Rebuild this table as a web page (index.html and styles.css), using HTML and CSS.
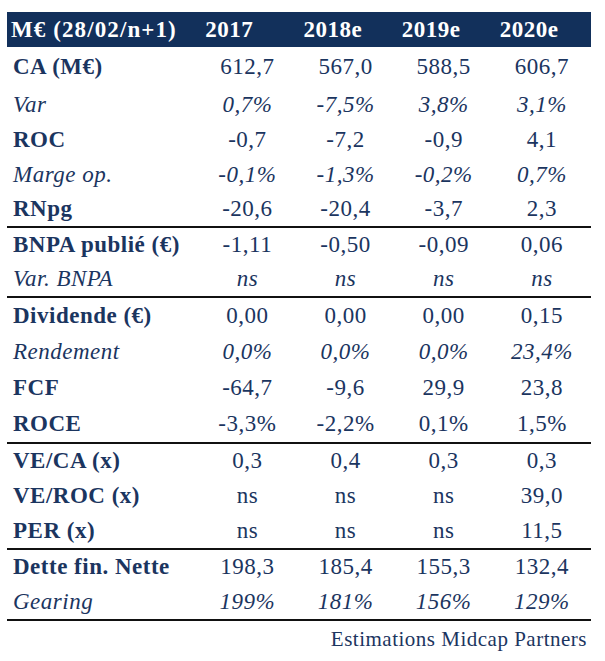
FILE: index.html
```html
<!DOCTYPE html>
<html lang="fr">
<head>
<meta charset="utf-8">
<title>Estimations</title>
<link rel="stylesheet" href="styles.css">
</head>
<body>
<div class="wrap">
<table class="fin">
<colgroup><col class="c-label"><col class="c-val"><col class="c-val"><col class="c-val"><col class="c-val"></colgroup>
<thead>
<tr class="head"><th class="lab">M€ (28/02/n+1)</th><th>2017</th><th>2018e</th><th>2019e</th><th>2020e</th></tr>
</thead>
<tbody class="s1">
<tr class="b first"><td class="lab">CA (M€)</td><td>612,7</td><td>567,0</td><td>588,5</td><td>606,7</td></tr>
<tr class="i"><td class="lab">Var</td><td>0,7%</td><td>-7,5%</td><td>3,8%</td><td>3,1%</td></tr>
<tr class="b"><td class="lab">ROC</td><td>-0,7</td><td>-7,2</td><td>-0,9</td><td>4,1</td></tr>
<tr class="i"><td class="lab">Marge op.</td><td>-0,1%</td><td>-1,3%</td><td>-0,2%</td><td>0,7%</td></tr>
<tr class="b"><td class="lab">RNpg</td><td>-20,6</td><td>-20,4</td><td>-3,7</td><td>2,3</td></tr>
</tbody>
<tbody class="s2 sep">
<tr class="b"><td class="lab">BNPA publié (€)</td><td>-1,11</td><td>-0,50</td><td>-0,09</td><td>0,06</td></tr>
<tr class="i"><td class="lab">Var. BNPA</td><td>ns</td><td>ns</td><td>ns</td><td>ns</td></tr>
</tbody>
<tbody class="s3 sep">
<tr class="b"><td class="lab">Dividende (€)</td><td>0,00</td><td>0,00</td><td>0,00</td><td>0,15</td></tr>
<tr class="i"><td class="lab">Rendement</td><td>0,0%</td><td>0,0%</td><td>0,0%</td><td>23,4%</td></tr>
<tr class="b"><td class="lab">FCF</td><td>-64,7</td><td>-9,6</td><td>29,9</td><td>23,8</td></tr>
<tr class="b"><td class="lab">ROCE</td><td>-3,3%</td><td>-2,2%</td><td>0,1%</td><td>1,5%</td></tr>
</tbody>
<tbody class="s4 sep">
<tr class="b"><td class="lab">VE/CA (x)</td><td>0,3</td><td>0,4</td><td>0,3</td><td>0,3</td></tr>
<tr class="b"><td class="lab">VE/ROC (x)</td><td>ns</td><td>ns</td><td>ns</td><td>39,0</td></tr>
<tr class="b"><td class="lab">PER (x)</td><td>ns</td><td>ns</td><td>ns</td><td>11,5</td></tr>
</tbody>
<tbody class="s5 sep last">
<tr class="b"><td class="lab">Dette fin. Nette</td><td>198,3</td><td>185,4</td><td>155,3</td><td>132,4</td></tr>
<tr class="i"><td class="lab">Gearing</td><td>199%</td><td>181%</td><td>156%</td><td>129%</td></tr>
</tbody>
</table>
<p class="source">Estimations Midcap Partners</p>
</div>
</body>
</html>
```
FILE: styles.css
```css
html, body {
  margin: 0;
  padding: 0;
  background: #ffffff;
}
body {
  font-family: "Liberation Serif", "Times New Roman", serif;
  color: #1b355f;
}
.wrap {
  padding: 12px 0 0 7px;
  width: 584px;
}
.fin {
  border-collapse: collapse;
  table-layout: fixed;
  width: 584px;
  font-size: 23px;
  letter-spacing: 0.5px;
}
.c-label { width: 191px; }
.c-val { width: 98px; }
.head {
  background: #12305b;
  color: #ffffff;
  height: 35px;
}
.head th {
  font-weight: bold;
  text-align: left;
  padding: 0 0 0 7px;
  white-space: nowrap;
}
.head th.lab {
  padding-left: 4px;
  letter-spacing: 1.1px;
}
.fin td {
  text-align: center;
  padding: 0;
  white-space: nowrap;
  vertical-align: middle;
}
.fin td.lab {
  text-align: left;
  padding-left: 6px;
}
.s1 tr { height: 35px; }
.s1 tr.first { height: 40px; }
.s2 tr { height: 35px; }
.s3 tr { height: 36.5px; }
.s4 tr { height: 35.3px; }
.s5 tr { height: 35.5px; }
.b td.lab { font-weight: bold; }
.i td { font-style: italic; }
.sep tr:first-child td {
  border-top: 2px solid #111111;
}
.last tr:last-child td {
  border-bottom: 2px solid #111111;
}
.source {
  margin: 6px 4px 0 0;
  text-align: right;
  font-size: 21px;
  letter-spacing: 0.5px;
}
```
